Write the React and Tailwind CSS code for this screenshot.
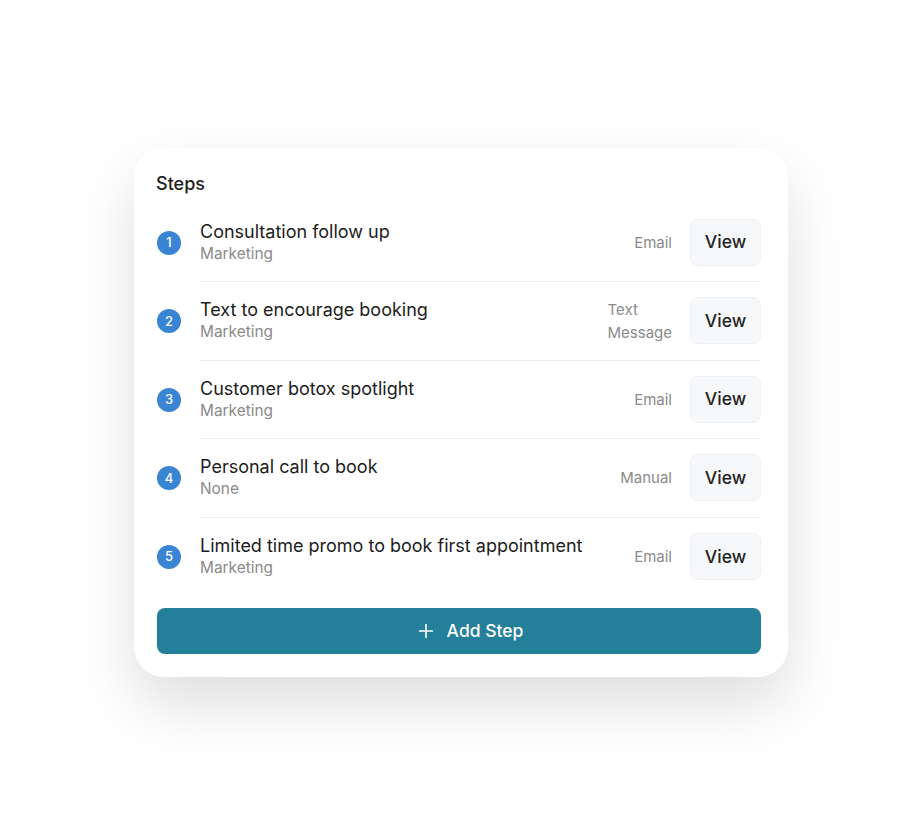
import React from "react";
import { Plus } from "lucide-react";

const steps = [
  { title: "Consultation follow up", tag: "Marketing", channel: ["Email"] },
  { title: "Text to encourage booking", tag: "Marketing", channel: ["Text", "Message"] },
  { title: "Customer botox spotlight", tag: "Marketing", channel: ["Email"] },
  { title: "Personal call to book", tag: "None", channel: ["Manual"] },
  { title: "Limited time promo to book first appointment", tag: "Marketing", channel: ["Email"] },
];

function StepRow({ step, index, last }) {
  return (
    <div className="flex items-center h-[78.5px]">
      {/* number badge */}
      <div className="w-6 h-6 rounded-full bg-[#3a84d4] text-white text-[13px] font-medium flex items-center justify-center mr-[19px] shrink-0">
        {index + 1}
      </div>
      <div
        className={`flex-1 h-full flex items-center ${
          last ? "" : "border-b border-[#ececec]"
        }`}
      >
        <div className="flex-1 min-w-0">
          <div className="text-[18px] leading-[23px] text-[#1c1c1c]">{step.title}</div>
          <div className="text-[15.4px] leading-[22px] text-[#8a8a8a]">{step.tag}</div>
        </div>
        <div className="text-[15px] leading-[23px] text-[#8a8a8a] mr-[18px]">
          {step.channel.map((line) => (
            <div key={line}>{line}</div>
          ))}
        </div>
        <button className="w-[71px] h-[47px] rounded-lg bg-[#f7f8fa] border border-[#eef0f3] text-[17.5px] font-medium text-[#232323]">
          View
        </button>
      </div>
    </div>
  );
}

export default function App() {
  return (
    <div className="w-[920px] h-[822px] bg-white flex items-center justify-center font-['Inter',sans-serif]">
      <div className="ml-[2px] mt-[2px] w-[654px] h-[529px] bg-white rounded-[30px] shadow-[0_28px_60px_rgba(0,0,0,0.13)] pl-[22px] pr-[27px] pt-[25px]">
        <div className="text-[18px] leading-[22px] font-medium text-[#1f1f1f] mb-[9px]">Steps</div>
        <div className="pl-[1px]">
          {steps.map((s, i) => (
            <StepRow key={i} step={s} index={i} last={i === steps.length - 1} />
          ))}
        </div>
        <button className="mt-[12px] ml-[1px] w-[604px] h-[46px] rounded-lg bg-[#24809a] text-white text-[17.5px] font-medium flex items-center justify-center gap-[10px] pl-5">
          <Plus size={22} strokeWidth={1.8} />
          Add Step
        </button>
      </div>
    </div>
  );
}
